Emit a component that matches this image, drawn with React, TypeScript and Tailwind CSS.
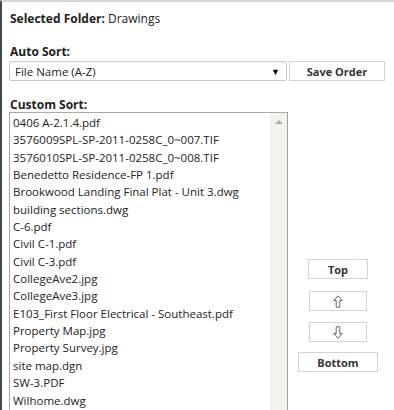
const FILES = [
  "0406 A-2.1.4.pdf",
  "3576009SPL-SP-2011-0258C_0~007.TIF",
  "3576010SPL-SP-2011-0258C_0~008.TIF",
  "Benedetto Residence-FP 1.pdf",
  "Brookwood Landing Final Plat - Unit 3.dwg",
  "building sections.dwg",
  "C-6.pdf",
  "Civil C-1.pdf",
  "Civil C-3.pdf",
  "CollegeAve2.jpg",
  "CollegeAve3.jpg",
  "E103_First Floor Electrical - Southeast.pdf",
  "Property Map.jpg",
  "Property Survey.jpg",
  "site map.dgn",
  "SW-3.PDF",
  "Wilhome.dwg",
];

const ArrowIcon = ({ down }: { down?: boolean }) => (
  <svg width="10" height="13" viewBox="0 0 10 13" className={down ? "rotate-180" : ""}>
    <path d="M5 0.8 L9.2 5.5 L6.8 5.5 L6.8 12.2 L3.2 12.2 L3.2 5.5 L0.8 5.5 Z" fill="none" stroke="#666" strokeWidth="1" />
  </svg>
);

const btn =
  "h-[20px] border border-[#d4d4d4] bg-white text-[11px] font-bold text-[#333] flex items-center justify-center";

export default function App() {
  return (
    <div className="w-[394px] h-[410px] overflow-hidden bg-white border-l-2 border-t-2 border-l-[#3c4b4b] border-t-[#d6d6d6] font-['Segoe_UI','Open_Sans',sans-serif] text-[11.5px] leading-[17px] text-[#222]">
      <div className="pl-[7px] pt-[8px]">
        <div className="pl-[1px] text-[12px]">
          <span className="font-bold">Selected Folder:</span> Drawings
        </div>
        <div className="pl-[1px] mt-[16px] font-bold text-[12px]">Auto Sort:</div>
        <div className="flex items-center mt-[1px]">
          <div className="w-[278px] h-[20px] border border-[#c8c8c8] rounded-[2px] flex items-center justify-between pl-[5px] pr-[6px]">
            <span>File Name (A-Z)</span>
            <span className="text-[9px] text-black">▼</span>
          </div>
          <div className={`${btn} ml-[2px] w-[96px]`}>Save Order</div>
        </div>
        <div className="pl-[1px] mt-[15px] font-bold text-[12px]">Custom Sort:</div>
        <div className="flex mt-[-1px]">
          <div className="w-[279px] h-[320px] border border-[#a9a9a9] border-r-[#a0a0a0] flex">
            <ul className="flex-1 pl-[3px] pt-[1px] leading-[17.35px] whitespace-nowrap overflow-hidden">
              {FILES.map((f) => (
                <li key={f}>{f}</li>
              ))}
            </ul>
            <div className="w-[17px] bg-[#f4f2ec] flex justify-center pt-[7px]">
              <div className="w-0 h-0 border-l-[4px] border-r-[4px] border-b-[4px] border-l-transparent border-r-transparent border-b-[#a3aca3]" />
            </div>
          </div>
          <div className="ml-[10px] w-[80px] flex flex-col items-center pt-[147px]">
            <div className={`${btn} w-[60px]`}>Top</div>
            <div className={`${btn} w-[58px] mt-[12px]`}>
              <ArrowIcon />
            </div>
            <div className={`${btn} w-[58px] mt-[11px]`}>
              <ArrowIcon down />
            </div>
            <div className={`${btn} w-[80px] mt-[10px]`}>Bottom</div>
          </div>
        </div>
      </div>
    </div>
  );
}
